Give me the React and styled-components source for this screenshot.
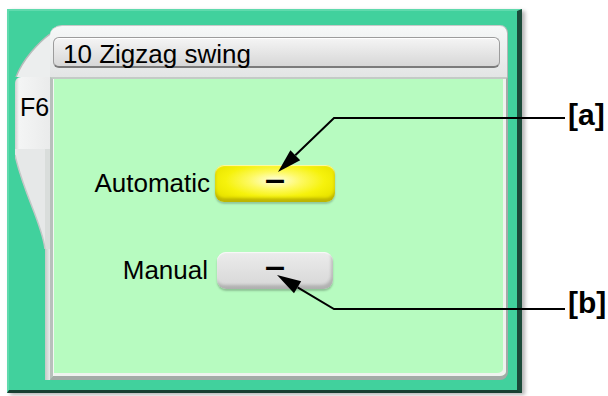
import React from "react";
import styled, { createGlobalStyle } from "styled-components";

const GlobalStyle = createGlobalStyle`
  body {
    margin: 0;
    background: #ffffff;
    font-family: "Liberation Sans", Arial, sans-serif;
    color: #000;
  }
`;

export default function App() {
  return (
    <>
      <GlobalStyle />
      <Page>
        <Frame>
          <Sheet>
            <Corner>
              <svg width="35" height="52" viewBox="0 0 35 52">
                <path d="M35 9 C 24 17, 8 34, 1 52 L35 52 Z" fill="#eceeee" />
                <path d="M35 9 C 24 17, 8 34, 1 52" fill="none" stroke="#b7bcbb" strokeWidth="1.5" />
              </svg>
            </Corner>
            <Header>
              <TitleBar>10 Zigzag swing</TitleBar>
            </Header>
            <Rail>
              <Tab>F6</Tab>
              <RailCurve>
                <svg width="35" height="100" viewBox="0 0 35 100" preserveAspectRatio="none">
                  <path d="M0 0 L35 0 L35 100 L30 100 C 27 74, 9 46, 0 6 Z" fill="#e6e8e8" />
                  <path d="M30 0 L30 100 L35 100 L35 0 Z" fill="#d9dddb" />
                  <path d="M0 6 C 9 46, 27 74, 30 100" fill="none" stroke="#c4c8c7" strokeWidth="1.5" />
                </svg>
              </RailCurve>
              <RailRest />
            </Rail>
            <Panel>
              <Options>
                <Label>Automatic</Label>
                <ValueButton $variant="yellow" $w={120}>
                  <Dash>–</Dash>
                </ValueButton>
                <Label $shift={2}>Manual</Label>
                <ValueButton $variant="gray" $w={116}>
                  <Dash>–</Dash>
                </ValueButton>
              </Options>
            </Panel>
          </Sheet>
        </Frame>

        <Callouts width="608" height="396" viewBox="0 0 608 396">
          <polyline points="565,118 334,118 295.3,155.3" fill="none" stroke="#000" strokeWidth="2" />
          <polygon points="278,172 300.2,160.3 290.4,150.3" fill="#000" />
          <polyline points="565,309 334,309 297.6,287.3" fill="none" stroke="#000" strokeWidth="2" />
          <polygon points="277,275 301.2,281.3 294,293.3" fill="#000" />
        </Callouts>
        <CalloutLabel $top={100} $left={568}>[a]</CalloutLabel>
        <CalloutLabel $top={288} $left={568}>[b]</CalloutLabel>
      </Page>
    </>
  );
}

const Page = styled.div`
  position: relative;
  width: 608px;
  height: 396px;
  box-sizing: border-box;
  padding: 9px 0 0 7px;
  overflow: hidden;
`;

const Frame = styled.div`
  width: 515px;
  height: 384px;
  box-sizing: border-box;
  background: #41d19d;
  border-top: 2px solid #5fdaad;
  border-left: 2px solid #5fdaad;
  border-right: 5px solid #1b4a39;
  border-bottom: 3px solid #173f31;
  box-shadow: 3px 2px 4px rgba(0, 0, 0, 0.3);
  padding: 14px 9px 10px 6px;
`;

const Sheet = styled.div`
  display: grid;
  grid-template-columns: 35px 1fr;
  grid-template-rows: 52px 1fr;
  height: 100%;
`;

const Corner = styled.div`
  svg {
    display: block;
  }
`;

const Header = styled.div`
  box-sizing: border-box;
  background: linear-gradient(#f6f8f8, #e3e5e5);
  border-top: 1px solid #c6cac9;
  border-right: 1px solid #b3b8b7;
  border-top-left-radius: 12px 10px;
  border-top-right-radius: 8px;
  padding: 11px 7px 9px 3px;
`;

const TitleBar = styled.div`
  height: 31px;
  box-sizing: border-box;
  border: 1px solid #9c9c9c;
  border-bottom: 2px solid #7b7b7b;
  border-radius: 6px;
  background: linear-gradient(#f5f5f5, #d7d7d7);
  box-shadow: inset 0 1px 0 #ffffff;
  font-size: 26px;
  line-height: 28px;
  padding: 2px 0 0 9px;
  white-space: nowrap;
`;

const Rail = styled.div`
  display: flex;
  flex-direction: column;
`;

const Tab = styled.div`
  height: 72px;
  box-sizing: border-box;
  background: linear-gradient(to right, #cdd0d0 0px, #f4f5f5 4px, #eaebeb 100%);
  border-top-left-radius: 6px;
  padding: 18px 0 0 5px;
  font-size: 25px;
  line-height: 1;
`;

const RailCurve = styled.div`
  flex: 0 0 100px;
  svg {
    display: block;
  }
`;

const RailRest = styled.div`
  flex: 1;
  background: linear-gradient(to right, transparent 30px, #c3c9c6 30px, #e9ecea 35px);
`;

const Panel = styled.div`
  box-sizing: border-box;
  background: #b7fbc0;
  border-top: 2px solid #c3cbc6;
  border-left: 3px solid #b8c0bc;
  border-right: 2px solid #a3aba7;
  border-bottom: 4px solid #a3aba7;
  border-bottom-right-radius: 8px;
  box-shadow: inset 1px 0 0 #f4f7f4, inset -3px -3px 0 #eff3ef;
  padding: 86px 0 0 0;
`;

const Options = styled.div`
  display: grid;
  grid-template-columns: 157px 120px;
  column-gap: 5px;
  row-gap: 50px;
`;

const Label = styled.div`
  align-self: center;
  text-align: right;
  font-size: 26px;
  padding-right: ${(p) => p.$shift || 0}px;
`;

const ValueButton = styled.div`
  justify-self: center;
  width: ${(p) => p.$w}px;
  height: 37px;
  box-sizing: border-box;
  border-radius: 9px;
  display: flex;
  align-items: center;
  justify-content: center;
  background: ${(p) =>
    p.$variant === "yellow"
      ? "radial-gradient(ellipse 55% 60% at 50% 42%, #ffffe4 0%, #fdf960 40%, #f6f20c 75%, #ece700 100%)"
      : "linear-gradient(#ececec, #d6d6d6)"};
  box-shadow: ${(p) =>
    p.$variant === "yellow"
      ? "inset 0 -4px 3px rgba(130, 120, 0, 0.45), inset 0 1px 1px #fffbb0, 0 2px 2px rgba(0, 0, 0, 0.2)"
      : "inset -2px -4px 3px rgba(0, 0, 0, 0.18), inset 0 1px 1px #fafafa, 0 2px 2px rgba(0, 0, 0, 0.22)"};
`;

const Dash = styled.span`
  font-size: 36px;
  font-weight: 700;
  line-height: 1;
  margin-top: -8px;
  transform: scaleY(0.85);
`;

const Callouts = styled.svg`
  position: absolute;
  top: 0;
  left: 0;
  pointer-events: none;
`;

const CalloutLabel = styled.div`
  position: absolute;
  top: ${(p) => p.$top}px;
  left: ${(p) => p.$left}px;
  font-size: 30px;
  font-weight: 700;
  line-height: 1;
`;
